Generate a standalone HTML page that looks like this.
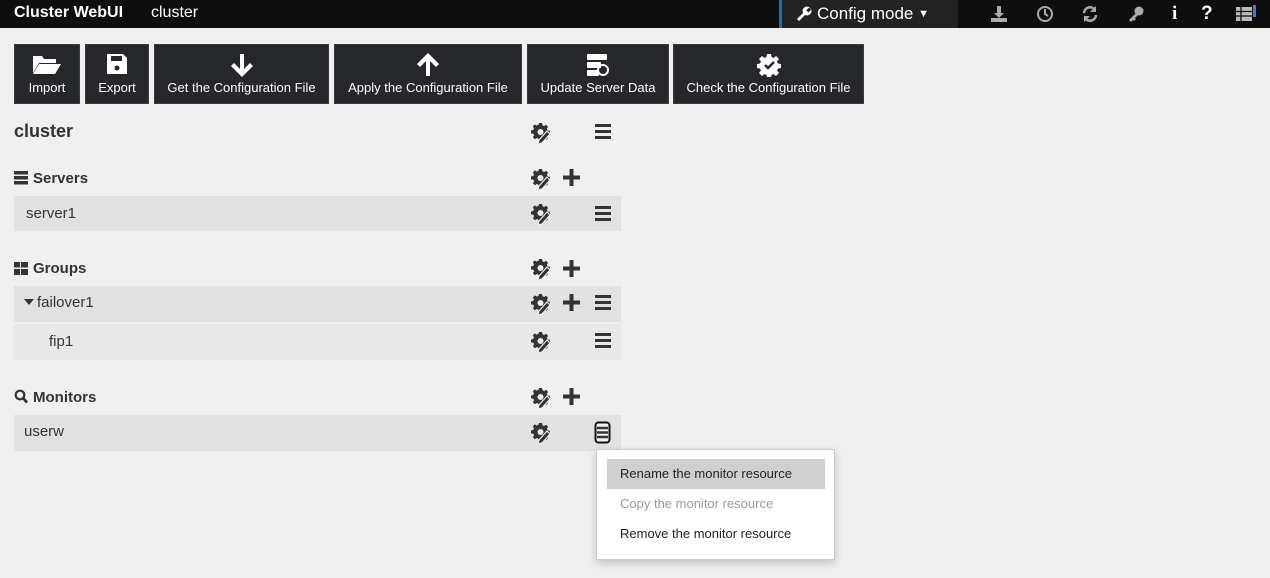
<!DOCTYPE html>
<html><head><meta charset="utf-8"><style>
*{box-sizing:border-box;margin:0;padding:0}
body{width:1270px;height:578px;background:#f0f0f0;font-family:"Liberation Sans",sans-serif;position:relative;overflow:hidden;color:#333}
.top{position:absolute;left:0;top:0;width:1270px;height:28px;background:#0e0e0e;color:#fff}
.abs{position:absolute}
.btn{position:absolute;top:44px;height:60px;background:#26272b;color:#fff;font-size:13px;text-align:center;border:1px solid #3a3a3a}
.btn span{position:absolute;left:0;right:0;top:35px}
.btn svg{position:absolute;left:50%;top:8px;transform:translateX(-50%)}
.row{position:absolute;left:14px;width:607px;font-size:15px;color:#333}
.h{position:absolute;font-weight:bold;font-size:15px;color:#333}
.ic{position:absolute}
.menu{position:absolute;left:596px;top:449px;width:239px;height:111px;background:#fff;border:1px solid #ccc;box-shadow:0 3px 8px rgba(0,0,0,.2);font-size:13px}
.menu div{position:absolute;left:10px;width:218px;height:30px;line-height:30px;padding-left:13px;color:#222}
</style></head><body>
<svg width="0" height="0" style="position:absolute"><defs>
<g id="gp"><path d="M9 1h3l.5 2.2 1.6.8 2-1.2 2 2-1.2 2 .8 1.6 2.2.5v3l-2.2.5-.8 1.6 1.2 2-2 2-2-1.2-1.6.8L12 19H9l-.5-2.2-1.6-.8-2 1.2-2-2 1.2-2-.8-1.6L1 11.5v-3l2.2-.5.8-1.6-1.2-2 2-2 2 1.2 1.6-.8z" fill="#333"/><circle cx="10.5" cy="10" r="3" fill="#f0f0f0"/><path d="M17 9l3 3-8 9-4 1 1-4z" fill="#333" stroke="#f0f0f0" stroke-width="1.2"/></g>
<g id="plus"><path d="M6.5 0h4v6.5H17v4h-6.5V17h-4v-6.5H0v-4h6.5z" fill="#333"/></g>
<g id="bars"><rect x="0" y="0" width="16" height="3" fill="#333"/><rect x="0" y="6" width="16" height="3" fill="#333"/><rect x="0" y="12" width="16" height="3" fill="#333"/></g>
</defs></svg>
<div class="top">
<div class="abs" style="left:14px;top:4px;font-weight:bold;font-size:16px">Cluster WebUI</div>
<div class="abs" style="left:151px;top:4px;font-size:16px">cluster</div>
<div class="abs" style="left:779px;top:0;width:179px;height:28px;background:#222;border-left:3px solid #1a6fb0"></div>
<svg class="abs" style="left:796px;top:6px" width="16" height="16"><circle cx="11" cy="5" r="4.5" fill="#fff"/><rect x="10" y="1" width="3" height="4" fill="#222" transform="rotate(45 11 5)"/><path d="M8 6l-7 7 2 2 7-7z" fill="#fff"/></svg>
<div class="abs" style="left:817px;top:4px;font-size:17px">Config mode <span style="font-size:11px;position:relative;top:-2px">▼</span></div>
<svg class="abs" style="left:990px;top:5px" width="18" height="18"><path d="M7 1h4v7h3l-5 5-5-5h3z M1 13h16v4H1z" fill="#aaa"/></svg>
<svg class="abs" style="left:1036px;top:5px" width="18" height="18"><circle cx="9" cy="9" r="7" fill="none" stroke="#aaa" stroke-width="2"/><path d="M9 4v5l3 2" stroke="#aaa" stroke-width="2" fill="none"/></svg>
<svg class="abs" style="left:1081px;top:5px" width="18" height="18"><path d="M3 8a6 6 0 0 1 11-3M15 10a6 6 0 0 1-11 3" stroke="#aaa" stroke-width="2.5" fill="none"/><path d="M15 1v6h-6zM3 17v-6h6z" fill="#aaa"/></svg>
<svg class="abs" style="left:1127px;top:5px" width="18" height="18"><circle cx="12" cy="6" r="4.5" fill="#aaa"/><path d="M9 8l-7 7 2 2 2-2 1 1 2-2-1-1 3-3" fill="#aaa"/></svg>
<div class="abs" style="left:1172px;top:3px;font-size:19px;font-weight:bold;font-family:'Liberation Serif',serif">i</div>
<div class="abs" style="left:1201px;top:3px;font-size:19px;font-weight:bold">?</div>
<svg class="abs" style="left:1236px;top:5px" width="22" height="18"><rect x="0" y="2" width="16" height="14" fill="#bbb"/><path d="M0 6.5h16M0 11h16M5 2v14" stroke="#0e0e0e" stroke-width="1.3"/><rect x="17" y="0" width="3" height="12" fill="#3b7fd0"/></svg>
</div>

<div class="btn" style="left:14px;width:66px"><svg width="30" height="22"><path d="M1 3h9l2 3h12v4H7l-6 10z" fill="#fff"/><path d="M7 11h22l-6 10H1z" fill="#fff"/></svg><span>Import</span></div>
<div class="btn" style="left:85px;width:64px"><svg width="22" height="22"><path d="M1 1h16l4 4v16H1z" fill="#fff"/><rect x="5" y="3" width="11" height="5" fill="#26272b"/><circle cx="11" cy="15" r="2.5" fill="#26272b"/></svg><span>Export</span></div>
<div class="btn" style="left:154px;width:175px"><svg width="22" height="24"><path d="M9 1h4v15l6-6 3 3-11 11L0 13l3-3 6 6z" fill="#fff"/></svg><span>Get the Configuration File</span></div>
<div class="btn" style="left:334px;width:188px"><svg width="22" height="24"><path d="M9 23h4V8l6 6 3-3L11 0 0 11l3 3 6-6z" fill="#fff"/></svg><span>Apply the Configuration File</span></div>
<div class="btn" style="left:527px;width:142px"><svg width="24" height="24"><rect x="1" y="1" width="20" height="6" rx="1" fill="#fff"/><rect x="1" y="9" width="14" height="6" rx="1" fill="#fff"/><rect x="1" y="17" width="12" height="6" rx="1" fill="#fff"/><circle cx="17" cy="17" r="5" fill="none" stroke="#fff" stroke-width="2"/></svg><span>Update Server Data</span></div>
<div class="btn" style="left:673px;width:191px"><svg width="24" height="24"><path d="M10 1h4l.5 3 2 1 2.5-2 3 3-2 2.5 1 2 3 .5v4l-3 .5-1 2 2 2.5-3 3-2.5-2-2 1-.5 3h-4l-.5-3-2-1-2.5 2-3-3 2-2.5-1-2-3-.5v-4l3-.5 1-2-2-2.5 3-3 2.5 2 2-1z" fill="#fff"/><path d="M8 12l3 3 6-6" stroke="#26272b" stroke-width="2.5" fill="none"/></svg><span>Check the Configuration File</span></div>

<div class="h" style="left:14px;top:121px;font-size:18px">cluster</div>
<svg class="ic" style="left:530px;top:122px" width="22" height="22"><use href="#gp"/></svg>
<svg class="ic" style="left:595px;top:124px" width="16" height="15"><use href="#bars"/></svg>

<svg class="ic" style="left:14px;top:171px" width="14" height="14"><rect width="14" height="3.5" y="0" fill="#333"/><rect width="14" height="3.5" y="5" fill="#333"/><rect width="14" height="3.5" y="10" fill="#333"/></svg>
<div class="h" style="left:33px;top:170px">Servers</div>
<svg class="ic" style="left:530px;top:168px" width="22" height="22"><use href="#gp"/></svg>
<svg class="ic" style="left:563px;top:169px" width="17" height="17"><use href="#plus"/></svg>
<div class="row" style="top:196px;height:35px;background:#e2e2e2"><span class="abs" style="left:12px;top:9px">server1</span></div>
<svg class="ic" style="left:530px;top:203px" width="22" height="22"><use href="#gp"/></svg>
<svg class="ic" style="left:595px;top:206px" width="16" height="15"><use href="#bars"/></svg>

<svg class="ic" style="left:14px;top:262px" width="14" height="13"><rect width="6" height="5.5" fill="#333"/><rect x="7" width="7" height="5.5" fill="#333"/><rect y="7" width="6" height="6" fill="#333"/><rect x="7" y="7" width="7" height="6" fill="#333"/></svg>
<div class="h" style="left:33px;top:260px">Groups</div>
<svg class="ic" style="left:530px;top:258px" width="22" height="22"><use href="#gp"/></svg>
<svg class="ic" style="left:563px;top:260px" width="17" height="17"><use href="#plus"/></svg>
<div class="row" style="top:286px;height:36px;background:#e2e2e2"><svg class="abs" style="left:10px;top:13px" width="10" height="6"><path d="M0 0h10L5 6z" fill="#333"/></svg><span class="abs" style="left:23px;top:8px">failover1</span></div>
<svg class="ic" style="left:530px;top:293px" width="22" height="22"><use href="#gp"/></svg>
<svg class="ic" style="left:563px;top:294px" width="17" height="17"><use href="#plus"/></svg>
<svg class="ic" style="left:595px;top:295px" width="16" height="15"><use href="#bars"/></svg>
<div class="row" style="top:324px;height:36px;background:#e9e9e9"><span class="abs" style="left:35px;top:9px">fip1</span></div>
<svg class="ic" style="left:530px;top:331px" width="22" height="22"><use href="#gp"/></svg>
<svg class="ic" style="left:595px;top:333px" width="16" height="15"><use href="#bars"/></svg>

<svg class="ic" style="left:14px;top:389px" width="14" height="15"><circle cx="6" cy="6" r="4.3" fill="none" stroke="#333" stroke-width="2.2"/><path d="M9 9l4 4.5" stroke="#333" stroke-width="2.8"/></svg>
<div class="h" style="left:33px;top:389px">Monitors</div>
<svg class="ic" style="left:530px;top:387px" width="22" height="22"><use href="#gp"/></svg>
<svg class="ic" style="left:563px;top:388px" width="17" height="17"><use href="#plus"/></svg>
<div class="row" style="top:415px;height:36px;background:#e2e2e2"><span class="abs" style="left:10px;top:8px">userw</span></div>
<svg class="ic" style="left:530px;top:422px" width="22" height="22"><use href="#gp"/></svg>
<svg class="ic" style="left:594px;top:421px" width="18" height="24"><rect x="1.5" y="1.5" width="14" height="20" rx="3" fill="#f3f3f3" stroke="#111" stroke-width="2"/><path d="M3 7h11M3 11.5h11M3 16h11" stroke="#333" stroke-width="2.5"/></svg>

<div class="menu">
<div style="top:9px;background:#d0d0d0">Rename the monitor resource</div>
<div style="top:39px;color:#999">Copy the monitor resource</div>
<div style="top:69px">Remove the monitor resource</div>
</div>
</body></html>
